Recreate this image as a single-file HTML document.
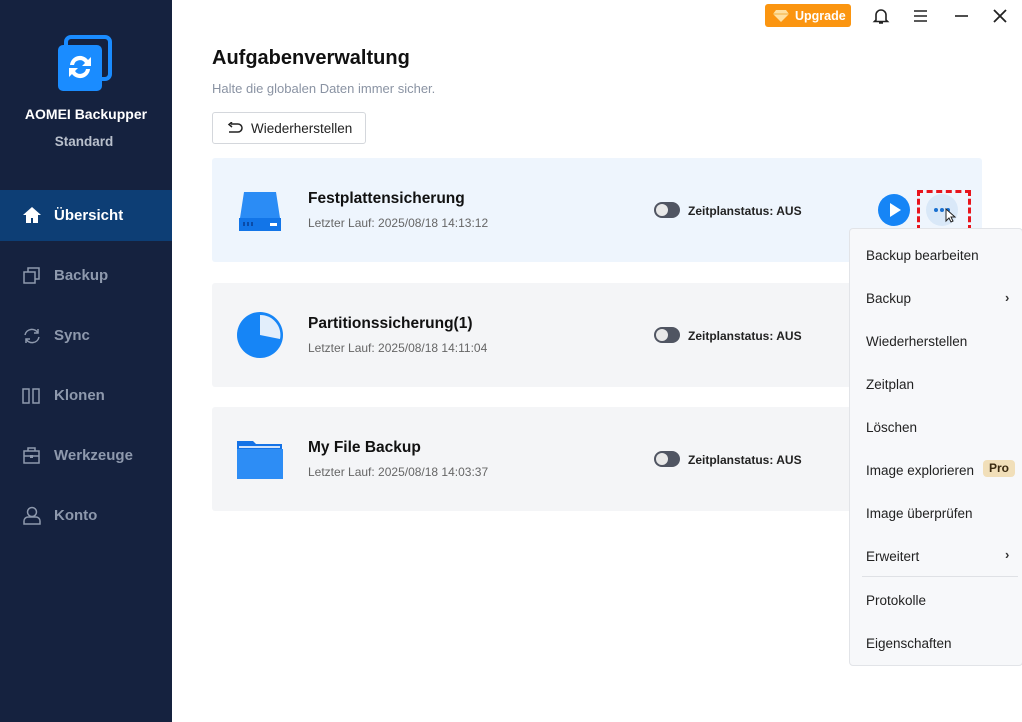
<!DOCTYPE html><html><head><style>
*{margin:0;padding:0;box-sizing:border-box}
body{width:1022px;height:722px;overflow:hidden;background:#fff;font-family:"Liberation Sans",sans-serif;position:relative}
.sb{position:absolute;left:0;top:0;width:172px;height:722px;background:#15223f}
.abs{position:absolute}
.nav{position:absolute;left:0;width:172px;height:51px;color:#8e99ad;font-size:15px;font-weight:bold}
.nav span{position:absolute;left:54px;top:17px}
.nav svg{position:absolute;left:22px;top:16px}
.card{position:absolute;left:212px;width:770px;height:104px;background:#f4f5f7;border-radius:3px}
.t{position:absolute;left:96px;top:32px;font-size:15.5px;font-weight:bold;color:#111}
.s{position:absolute;left:96px;top:58px;font-size:12px;color:#666}
.tg{position:absolute;left:442px;top:44px;width:26px;height:16px;border-radius:8px;background:#505562}
.tg:after{content:"";position:absolute;left:2px;top:2px;width:12px;height:12px;border-radius:6px;background:#e8e8e8}
.zs{position:absolute;left:476px;top:46px;font-size:12px;font-weight:bold;color:#222}
.menu{position:absolute;left:849px;top:228px;width:174px;height:438px;background:#f7f8fa;border:1px solid #e2e4e8;border-radius:4px}
.mi{position:absolute;left:16px;font-size:13.5px;color:#222}
.ch{position:absolute;left:155px;font-size:13px;color:#333;font-weight:bold}
</style></head><body>
<div class="sb">
<svg class="abs" style="left:56px;top:35px" width="58" height="58"><rect x="10" y="2" width="44" height="42" rx="5" fill="none" stroke="#1a8cff" stroke-width="4"/><rect x="2" y="10" width="44" height="46" rx="5" fill="#1a8cff"/><path d="M14 30a10 10 0 0 1 18-5l3-3v9h-9l3-3a6 6 0 0 0-11 2z M34 34a10 10 0 0 1-18 5l-3 3v-9h9l-3 3a6 6 0 0 0 11-2z" fill="#fff"/></svg>
<div class="abs" style="left:0;width:172px;top:106px;text-align:center;color:#fff;font-weight:bold;font-size:14px">AOMEI Backupper</div>
<div class="abs" style="left:0;width:168px;top:134px;text-align:center;color:#b9c0cc;font-weight:bold;font-size:13.5px">Standard</div>
<div class="nav" style="top:190px;background:#0d3e75;color:#fff"><svg width="20" height="18"><path d="M10 1L1 9h3v8h5v-5h2v5h5V9h3z" fill="#fff"/></svg><span>Übersicht</span></div>
<div class="nav" style="top:250px"><svg width="20" height="20"><rect x="2" y="6" width="11" height="11" fill="none" stroke="#8e99ad" stroke-width="1.5"/><path d="M6 6V2h11v11h-4" fill="none" stroke="#8e99ad" stroke-width="1.5"/></svg><span>Backup</span></div>
<div class="nav" style="top:310px"><svg width="20" height="20"><path d="M3 9a7 7 0 0 1 13-2M17 11a7 7 0 0 1-13 2" fill="none" stroke="#8e99ad" stroke-width="1.5"/><path d="M16 3v4h-4M4 17v-4h4" fill="none" stroke="#8e99ad" stroke-width="1.5"/></svg><span>Sync</span></div>
<div class="nav" style="top:370px"><svg width="20" height="20"><rect x="1" y="3" width="6" height="14" fill="none" stroke="#8e99ad" stroke-width="1.5"/><rect x="11" y="3" width="6" height="14" fill="none" stroke="#8e99ad" stroke-width="1.5"/></svg><span>Klonen</span></div>
<div class="nav" style="top:430px"><svg width="20" height="20"><rect x="2" y="5" width="15" height="12" fill="none" stroke="#8e99ad" stroke-width="1.5"/><path d="M6 5V2h7v3M2 10h15" fill="none" stroke="#8e99ad" stroke-width="1.5"/><rect x="8" y="9" width="3" height="3" fill="#8e99ad"/></svg><span>Werkzeuge</span></div>
<div class="nav" style="top:490px"><svg width="20" height="20"><circle cx="10" cy="6" r="4.5" fill="none" stroke="#8e99ad" stroke-width="1.5"/><path d="M2 18v-3a4 4 0 0 1 4-4h8a4 4 0 0 1 4 4v3z" fill="none" stroke="#8e99ad" stroke-width="1.5"/></svg><span>Konto</span></div>
</div>
<div class="abs" style="left:765px;top:4px;width:86px;height:23px;background:#fb9510;border-radius:3px;color:#fff;font-size:12.5px;font-weight:bold"><svg class="abs" style="left:7px;top:5px" width="18" height="14"><path d="M4 1h10l3 4-8 8-8-8z" fill="#ffe0a0"/><path d="M1 5h16" stroke="#f2b040"/></svg><span style="position:absolute;left:30px;top:5px">Upgrade</span></div>
<svg class="abs" style="left:872px;top:7px" width="18" height="18"><path d="M4 13V8a5 5 0 0 1 10 0v5l1.5 1.5h-13zM7 16h4" fill="none" stroke="#222" stroke-width="1.6"/></svg>
<svg class="abs" style="left:913px;top:9px" width="16" height="14"><path d="M1 2h13M1 7h13M1 12h13" stroke="#222" stroke-width="1.6"/></svg>
<svg class="abs" style="left:954px;top:9px" width="16" height="14"><path d="M1 7h13" stroke="#222" stroke-width="1.6"/></svg>
<svg class="abs" style="left:993px;top:9px" width="14" height="14"><path d="M1 1l12 12M13 1L1 13" stroke="#222" stroke-width="1.8"/></svg>
<div class="abs" style="left:212px;top:47px;font-size:20px;font-weight:bold;color:#111">Aufgabenverwaltung</div>
<div class="abs" style="left:212px;top:81px;font-size:13px;color:#8a93a3">Halte die globalen Daten immer sicher.</div>
<div class="abs" style="left:212px;top:112px;width:154px;height:32px;border:1px solid #d4d7dc;border-radius:3px;font-size:13.5px;color:#222"><svg class="abs" style="left:14px;top:9px" width="16" height="12"><path d="M4 2h7a4 4 0 0 1 0 8H2" fill="none" stroke="#222" stroke-width="1.5"/><path d="M5 0L2 2.5 5 5" fill="none" stroke="#222" stroke-width="1.5"/></svg><span style="position:absolute;left:38px;top:8px">Wiederherstellen</span></div>
<div class="card" style="top:158px;background:#eef5fd">
<svg class="abs" style="left:26px;top:34px" width="44" height="40"><path d="M6 0h32l4 26H2z" fill="#2b8cf5"/><rect x="1" y="26" width="42" height="13" fill="#1275e8"/><rect x="5" y="30" width="2" height="4" fill="#0a4ba8"/><rect x="9" y="30" width="2" height="4" fill="#0a4ba8"/><rect x="13" y="30" width="2" height="4" fill="#0a4ba8"/><rect x="32" y="31" width="7" height="3" fill="#fff"/></svg>
<div class="t">Festplattensicherung</div><div class="s">Letzter Lauf: 2025/08/18 14:13:12</div>
<div class="tg"></div><div class="zs">Zeitplanstatus: AUS</div>
<div class="abs" style="left:666px;top:36px;width:32px;height:32px;border-radius:16px;background:#1685f6"><svg width="32" height="32"><path d="M12 9l11 7-11 7z" fill="#fff"/></svg></div>
<div class="abs" style="left:714px;top:36px;width:32px;height:32px;border-radius:16px;background:#d9e8f8"><svg width="32" height="32"><circle cx="10" cy="16" r="2" fill="#1a70d0"/><circle cx="16" cy="16" r="2" fill="#1a70d0"/><circle cx="22" cy="16" r="2" fill="#1a70d0"/><path d="M20 15v12l3-3 2 4 2-1-2-4h4z" fill="#fff" stroke="#222" stroke-width="1"/></svg></div>
<div class="abs" style="left:705px;top:32px;width:54px;height:41px;border:3px dashed #e8141c"></div>
</div>
<div class="card" style="top:283px">
<svg class="abs" style="left:24px;top:28px" width="48" height="48"><circle cx="24" cy="24" r="23" fill="#1685f6"/><path d="M24 4a20 20 0 0 1 20 24L24 24z" fill="#e2eefb"/></svg>
<div class="t">Partitionssicherung(1)</div><div class="s">Letzter Lauf: 2025/08/18 14:11:04</div>
<div class="tg"></div><div class="zs">Zeitplanstatus: AUS</div></div>
<div class="card" style="top:407px">
<svg class="abs" style="left:25px;top:32px" width="46" height="40"><path d="M0 2h16l3 3h26v35H0z" fill="#1472e6"/><rect x="2" y="7" width="41" height="2" fill="#cfe2fb"/><rect x="0" y="10" width="46" height="30" fill="#2d8df5"/></svg>
<div class="t">My File Backup</div><div class="s">Letzter Lauf: 2025/08/18 14:03:37</div>
<div class="tg"></div><div class="zs">Zeitplanstatus: AUS</div></div>
<div class="menu">
<div class="mi" style="top:19px">Backup bearbeiten</div>
<div class="mi" style="top:62px">Backup</div><div class="ch" style="top:61px">›</div>
<div class="mi" style="top:105px">Wiederherstellen</div>
<div class="mi" style="top:148px">Zeitplan</div>
<div class="mi" style="top:191px">Löschen</div>
<div class="mi" style="top:234px">Image explorieren</div>
<div class="abs" style="left:133px;top:231px;width:32px;height:17px;border-radius:4px;background:#f1dfb9;font-size:12px;font-weight:bold;color:#3a2a10;text-align:center;line-height:17px">Pro</div>
<div class="mi" style="top:277px">Image überprüfen</div>
<div class="mi" style="top:320px">Erweitert</div><div class="ch" style="top:318px">›</div>
<div class="abs" style="left:12px;top:347px;width:156px;height:1px;background:#dfe1e5"></div>
<div class="mi" style="top:364px">Protokolle</div>
<div class="mi" style="top:407px">Eigenschaften</div>
</div>
</body></html>
